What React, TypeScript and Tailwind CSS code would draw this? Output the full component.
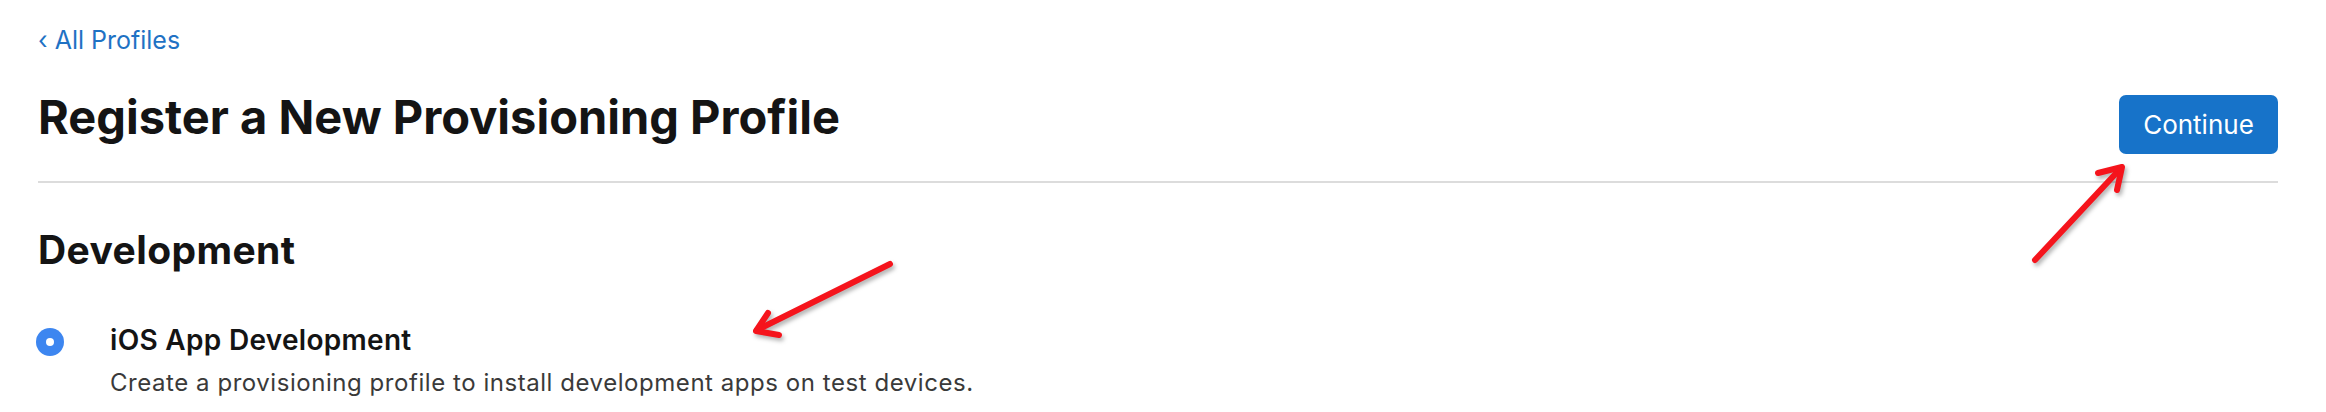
export default function App() {
  return (
    <div
      className="relative w-[2326px] h-[412px] overflow-hidden bg-white pl-[38px] pr-[48px] pt-[26px]"
      style={{ fontFamily: 'Inter, "Noto Sans", "Liberation Sans", sans-serif' }}
    >
      <a className="block text-[25px] leading-[28px] text-[#1f72c4]">‹ All Profiles</a>

      <div className="mt-[34px] flex items-start justify-between pb-[27px] border-b-2 border-[#dcdcdc]">
        <h1 className="text-[47px] leading-[57px] font-bold text-[#141414]">
          Register a New Provisioning Profile
        </h1>
        <button className="mt-[7px] h-[59px] w-[159px] rounded-[7px] bg-[#1773c9] text-[26px] text-white">
          Continue
        </button>
      </div>

      <h2 className="mt-[44px] text-[39px] leading-[45px] font-bold tracking-[0.4px] text-[#141414]">
        Development
      </h2>

      <div className="mt-[52px] flex items-start">
        <div className="ml-[-2px] mt-[4px] flex h-[28px] w-[28px] items-center justify-center rounded-full bg-[#3d86f0]">
          <div className="h-[8px] w-[8px] rounded-full bg-white" />
        </div>
        <div className="ml-[46px]">
          <div className="text-[28px] leading-[33px] font-semibold tracking-[0.3px] text-[#141414]">
            iOS App Development
          </div>
          <div className="mt-[12px] text-[24px] leading-[28px] tracking-[0.55px] text-[#3a3a3a]">
            Create a provisioning profile to install development apps on test devices.
          </div>
        </div>
      </div>

      {/* annotation arrows */}
      <svg
        className="pointer-events-none absolute left-0 top-0 drop-shadow-[2px_3px_2px_rgba(0,0,0,0.3)]"
        width="2326"
        height="412"
        fill="none"
        stroke="#f5141c"
        strokeWidth="6"
        strokeLinecap="round"
        strokeLinejoin="round"
      >
        <path d="M890 264 L757 330" />
        <path d="M768 313 L756 331 L779 335" />
        <path d="M2035 260 L2121 168" />
        <path d="M2098 173 L2122 167 L2117 190" />
      </svg>
    </div>
  );
}
